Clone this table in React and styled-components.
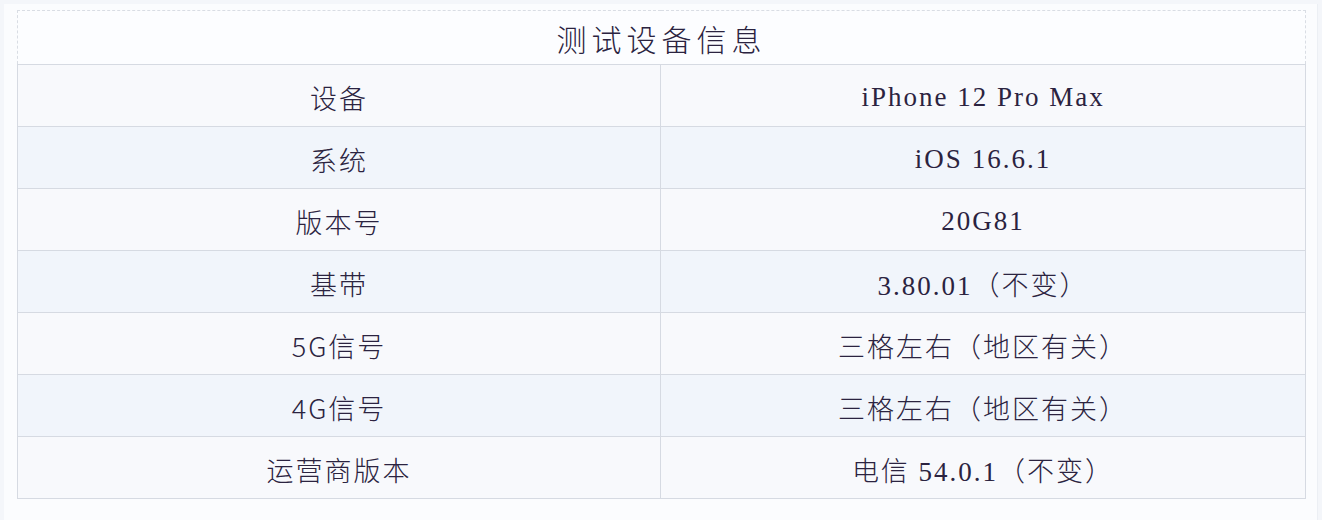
import React from "react";
import styled, { createGlobalStyle } from "styled-components";

const rows = [
  ["设备", "iPhone 12 Pro Max"],
  ["系统", "iOS 16.6.1"],
  ["版本号", "20G81"],
  ["基带", "3.80.01（不变）"],
  ["5G信号", "三格左右（地区有关）"],
  ["4G信号", "三格左右（地区有关）"],
  ["运营商版本", "电信 54.0.1（不变）"],
];

const Global = createGlobalStyle`
  html, body {
    margin: 0;
    padding: 0;
    background: #f4f6fa;
  }
`;

const Page = styled.div`
  width: 1322px;
  height: 520px;
  box-sizing: border-box;
  padding: 4px 4px 0 4px;
`;

const Sheet = styled.div`
  height: 100%;
  box-sizing: border-box;
  background: #fbfcfe;
  padding: 6px 13px 0 13px;
  border-right: 1px solid #eceff4;
`;

const Table = styled.table`
  width: 1288px;
  border-collapse: collapse;
  table-layout: fixed;
  color: #2b2340;
  font-family: "Liberation Serif", "Noto Sans CJK SC", serif;
`;

const Caption = styled.th`
  height: 53px;
  padding: 0;
  border: 1px dashed #d9dde4;
  border-bottom: 1px solid #d6dae2;
  background: #fcfdff;
  font-family: "Noto Sans CJK SC", sans-serif;
  font-weight: 300;
  font-size: 30px;
  letter-spacing: 5px;
  text-align: center;
`;

const Row = styled.tr`
  background: ${(p) => (p.$alt ? "#f1f5fb" : "#f8f9fc")};
`;

const Cell = styled.td`
  height: 58px;
  padding: 3px 0 0;
  border: 1px solid #d6dae2;
  text-align: center;
  font-size: 27px;
  font-weight: 300;
  letter-spacing: 2px;
  font-family: ${(p) =>
    p.$cjk ? '"Noto Sans CJK SC", sans-serif' : '"Liberation Serif", "Noto Sans CJK SC", serif'};
`;

export default function App() {
  return (
    <>
      <Global />
      <Page>
        <Sheet>
          <Table>
            <colgroup>
              <col style={{ width: 643 }} />
              <col style={{ width: 645 }} />
            </colgroup>
            <thead>
              <tr>
                <Caption colSpan={2}>测试设备信息</Caption>
              </tr>
            </thead>
            <tbody>
              {rows.map(([k, v], i) => (
                <Row key={k} $alt={i % 2 === 1}>
                  <Cell $cjk>{k}</Cell>
                  <Cell>{v}</Cell>
                </Row>
              ))}
            </tbody>
          </Table>
        </Sheet>
      </Page>
    </>
  );
}
